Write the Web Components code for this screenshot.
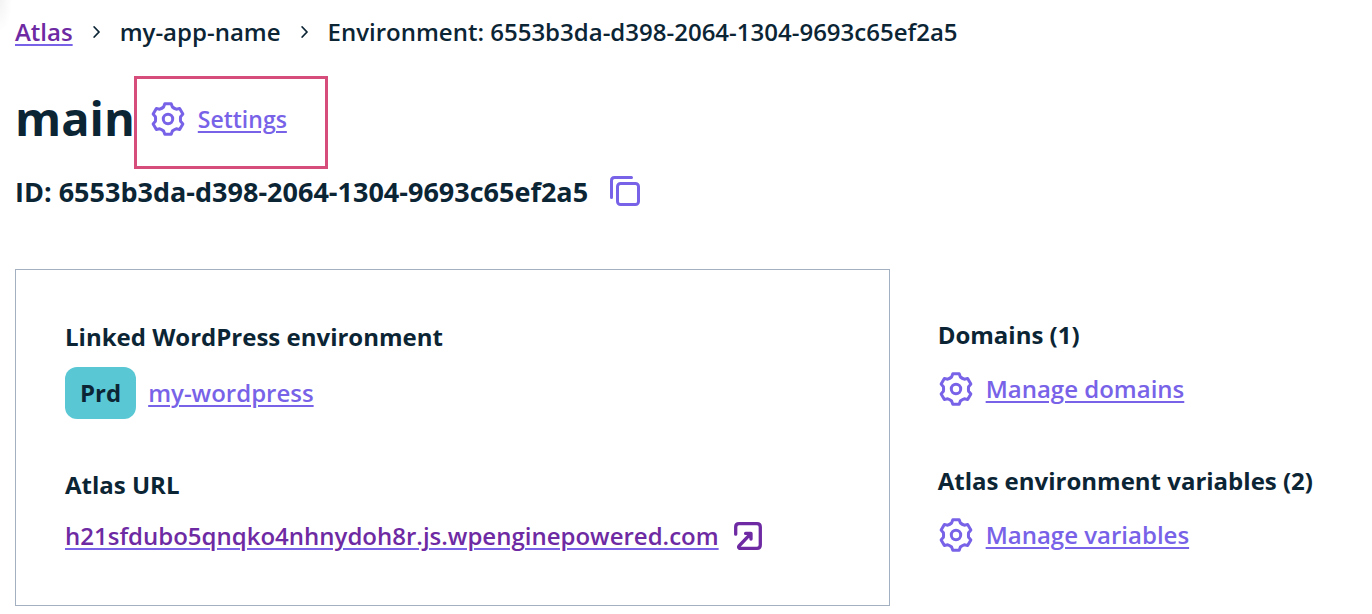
<!DOCTYPE html>
<html lang="en">
<head>
<meta charset="utf-8">
<title>main – Atlas environment</title>
<style>
  body {
    margin: 0;
    background: #fff;
    color: #0c2535;
    font: 600 24px/34px "Open Sans", sans-serif;
    --link: #7863e8;
    --visited: #6e2aa3;
    --callout: #d64d7b;
    --line: #a3b0c2;
    --prd: #5ac8d4;
  }
</style>
</head>
<body>
<environment-page></environment-page>

<script>
const NS = {};

// Six-toothed cog outline, centred on 0,0: one tooth and one valley repeated every 60 degrees.
function cogPath() {
  const at = (x, y, deg) => {
    const a = deg * Math.PI / 180;
    return (x * Math.cos(a) - y * Math.sin(a)).toFixed(2) + " " + (x * Math.sin(a) + y * Math.cos(a)).toFixed(2);
  };
  let d = "";
  for (let k = 0; k < 6; k++) {
    const r = k * 60;
    d += (k ? "L" : "M") + at(-3.2, -15.3, r) + "L" + at(3.2, -15.3, r) + "L" + at(4.4, -12, r) +
      "Q" + at(6.1, -10.6, r) + " " + at(8.2, -9.8, r);
  }
  return d + "Z";
}

NS.icons = {
  cog: `<svg width="36" height="36" viewBox="-18 -18 36 36"><path d="${cogPath()}"/><circle r="4.7"/></svg>`,
  copy: `<svg width="30" height="30" viewBox="0 0 30 30"><path d="M1.5 21.5V4.5Q1.5 1.5 4.5 1.5H21.5"/><rect x="7.5" y="7.5" width="21" height="21" rx="3"/></svg>`,
  open: `<svg width="28" height="28" viewBox="0 0 28 28" style="stroke-width:3.3"><path d="M1.7 12.2V5Q1.7 1.7 5 1.7H23Q26.3 1.7 26.3 5V23Q26.3 26.3 23 26.3H5.4Q4 25.5 5 24L16.8 11.6M11.6 11.4H17V17"/></svg>`,
  chevron: `<svg width="7" height="12" viewBox="0 0 7 12" style="stroke-width:1.8;stroke:currentColor"><path d="M1.2 1L6 6L1.2 11"/></svg>`
};

function define(name, html, setup) {
  const template = document.createElement("template");
  template.innerHTML = html;
  customElements.define(name, class extends HTMLElement {
    constructor() {
      super();
      this.attachShadow({ mode: "open" }).append(template.content.cloneNode(true));
    }
    connectedCallback() { if (setup) setup(this, this.shadowRoot); }
  });
}

define("ui-icon", `
  <style>
    :host { display: flex; flex: none; }
    svg { display: block; fill: none; stroke: currentColor; stroke-width: 3; stroke-linecap: round; stroke-linejoin: round; }
  </style>
  <span></span>`, (el, root) => {
  root.querySelector("span").innerHTML = NS.icons[el.getAttribute("name")];
});

define("ui-link", `
  <style>
    :host { display: inline-flex; }
    a { color: var(--link); text-decoration: underline var(--link) 2px; text-underline-offset: 3px; }
    :host([seen]) a { color: var(--visited); }
  </style>
  <a href="#"><slot></slot></a>`);

define("icon-link", `
  <style>
    :host { display: flex; align-items: center; gap: 12px; color: var(--link); }
  </style>
  <ui-icon name="cog"></ui-icon><ui-link><slot></slot></ui-link>`);

define("env-badge", `
  <style>
    :host { display: block; padding: 9px 15px; border-radius: 12px; background: var(--prd); font-weight: 700; }
  </style>
  <slot></slot>`);

define("bread-crumbs", `
  <style>
    :host { display: block; }
    nav { display: flex; align-items: center; gap: 20px; }
  </style>
  <nav aria-label="Breadcrumb">
    <ui-link seen>Atlas</ui-link>
    <ui-icon name="chevron"></ui-icon>
    <span>my-app-name</span>
    <ui-icon name="chevron"></ui-icon>
    <span>Environment: 6553b3da-d398-2064-1304-9693c65ef2a5</span>
  </nav>`);

define("page-title", `
  <style>
    :host { display: block; }
    .name { display: flex; align-items: flex-start; }
    h1 { margin: 0; padding: 12px 0; font: 700 47px/60px "Open Sans", sans-serif; }
    .callout { box-sizing: border-box; width: 194px; height: 93px; margin-left: -1px; padding: 22px 13px; border: 3px solid var(--callout); font-size: 23px; }
    .id { display: flex; align-items: center; gap: 22px; margin-top: 4px; }
    p { margin: 0; font: 700 27px/38px "Open Sans", sans-serif; }
    button { padding: 0 0 2px; border: 0; background: none; color: var(--link); cursor: pointer; }
  </style>
  <div class="name">
    <h1>main</h1>
    <div class="callout"><icon-link>Settings</icon-link></div>
  </div>
  <div class="id">
    <p>ID: 6553b3da-d398-2064-1304-9693c65ef2a5</p>
    <button type="button" aria-label="Copy ID"><ui-icon name="copy"></ui-icon></button>
  </div>`);

define("info-block", `
  <style>
    :host { display: block; }
    h2 { margin: 0 0 var(--block-gap, 19px); font: 700 24px/34px "Open Sans", sans-serif; }
  </style>
  <h2><slot name="title"></slot></h2>
  <slot></slot>`);

define("linked-card", `
  <style>
    :host { display: flex; flex-direction: column; gap: 49px; box-sizing: border-box; padding: 50px 49px 52px; border: 1px solid var(--line); }
    .row { display: flex; align-items: center; gap: 12px; }
    .url { gap: 15px; }
    .url ui-icon { color: var(--visited); }
    .env { --block-gap: 13px; }
    .site { --block-gap: 17px; }
  </style>
  <info-block class="env">
    <span slot="title">Linked WordPress environment</span>
    <div class="row"><env-badge>Prd</env-badge><ui-link>my-wordpress</ui-link></div>
  </info-block>
  <info-block class="site">
    <span slot="title">Atlas URL</span>
    <div class="row url"><ui-link seen>h21sfdubo5qnqko4nhnydoh8r.js.wpenginepowered.com</ui-link><ui-icon name="open"></ui-icon></div>
  </info-block>`);

define("environment-page", `
  <style>
    :host { display: block; padding: 15px 15px 8px; background: radial-gradient(ellipse 12px 32px at 0 0, #f3f3f3, #fff) no-repeat; }
    page-title { margin-top: 27px; }
    main { display: grid; grid-template-columns: minmax(0, 2fr) minmax(0, 1fr); gap: 30px; margin-top: 58px; }
    aside { display: flex; flex-direction: column; gap: 57px; padding: 49px 0 0 18px; }
  </style>
  <bread-crumbs></bread-crumbs>
  <page-title></page-title>
  <main>
    <linked-card></linked-card>
    <aside>
      <info-block><span slot="title">Domains (1)</span><icon-link>Manage domains</icon-link></info-block>
      <info-block><span slot="title">Atlas environment variables (2)</span><icon-link>Manage variables</icon-link></info-block>
    </aside>
  </main>`);
</script>
</body>
</html>
